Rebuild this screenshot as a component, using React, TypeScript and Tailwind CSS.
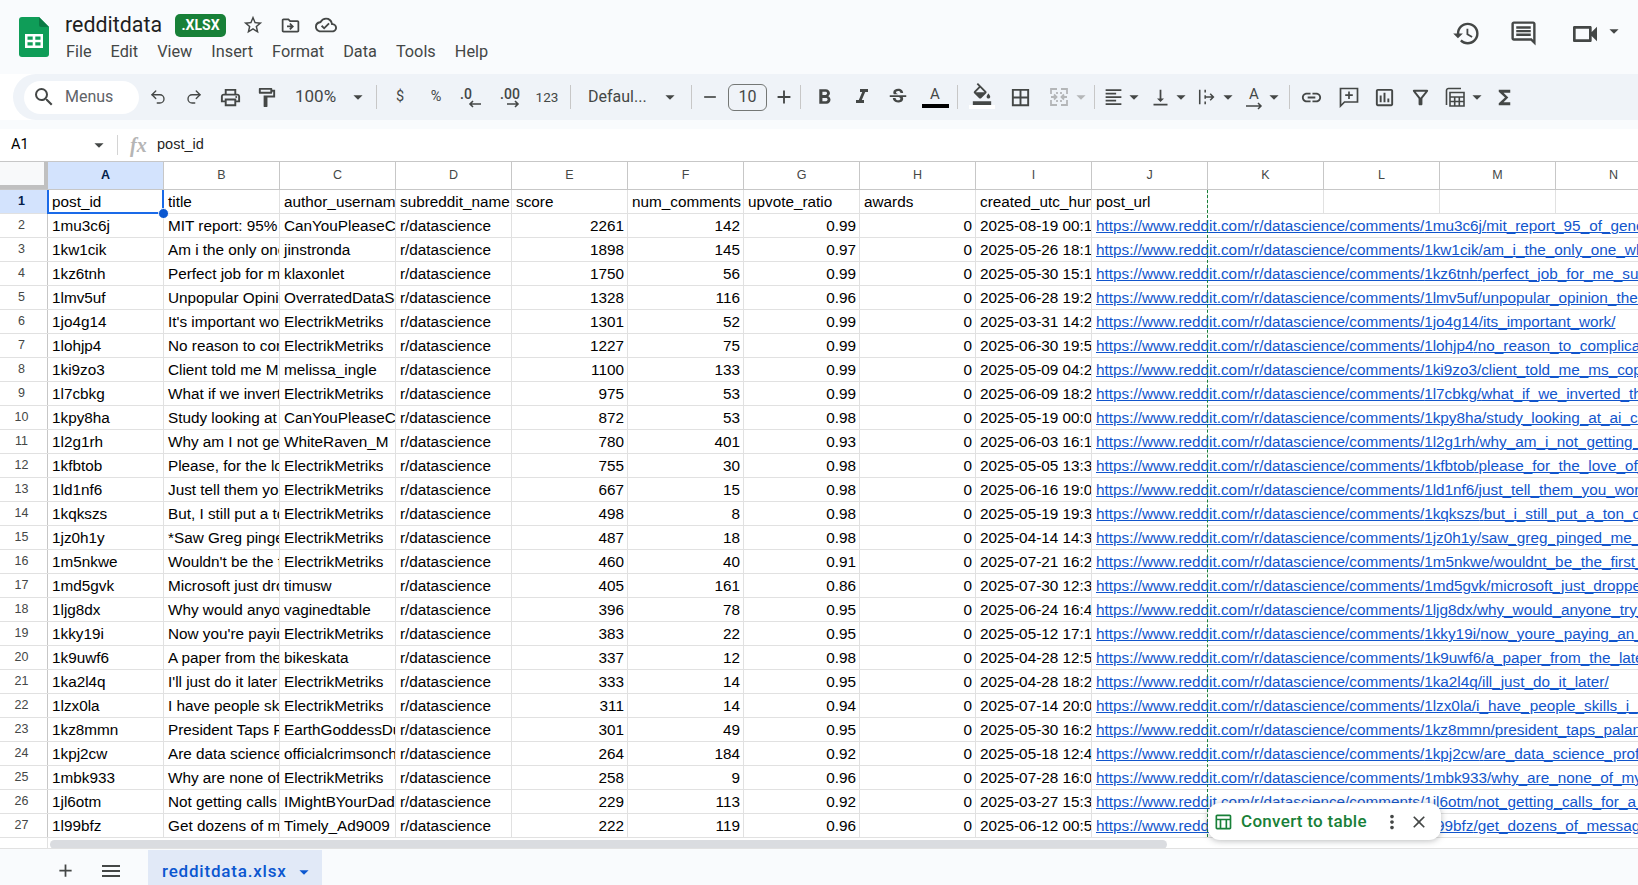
import type { ReactNode } from "react";
import { Redo2, Undo2 } from "lucide-react";
import {
  MdAdd, MdArrowDropDown, MdBorderAll, MdClose, MdFormatAlignLeft, MdFormatBold, MdFormatColorFill,
  MdFormatItalic, MdFunctions, MdHistory, MdInsertLink, MdMenu, MdMoreVert,
  MdOutlineCloudDone, MdOutlineComment, MdOutlineDriveFileMove, MdOutlineFilterAlt,
  MdOutlineFormatPaint, MdOutlineInsertChart, MdOutlinePrint, MdOutlineTableChart, MdOutlineVideocam,
  MdRemove, MdSearch, MdStarBorder, MdStrikethroughS, MdVerticalAlignBottom,
} from "react-icons/md";

const COLS = ["A", "B", "C", "D", "E", "F", "G", "H", "I", "J", "K", "L", "M", "N"];
const BASE = "https://www.reddit.com/r/datascience/comments/";

type Row = [string, string, string, number, number, string, string, string];

const ROWS: Row[] = [
  ["1mu3c6j", "MIT report: 95% of generative", "CanYouPleaseChill", 2261, 142, "0.99", "2025-08-19 00:1", "mit_report_95_of_generative_ai/"],
  ["1kw1cik", "Am i the only one who", "jinstronda", 1898, 145, "0.97", "2025-05-26 18:1", "am_i_the_only_one_who_thinks/"],
  ["1kz6tnh", "Perfect job for me", "klaxonlet", 1750, 56, "0.99", "2025-05-30 15:1", "perfect_job_for_me_sure_thing/"],
  ["1lmv5uf", "Unpopular Opinion", "OverratedDataScience", 1328, 116, "0.96", "2025-06-28 19:2", "unpopular_opinion_these_are/"],
  ["1jo4g14", "It's important work", "ElectrikMetriks", 1301, 52, "0.99", "2025-03-31 14:2", "its_important_work/"],
  ["1lohjp4", "No reason to complicate", "ElectrikMetriks", 1227, 75, "0.99", "2025-06-30 19:5", "no_reason_to_complicate_things/"],
  ["1ki9zo3", "Client told me MS Copilot", "melissa_ingle", 1100, 133, "0.99", "2025-05-09 04:2", "client_told_me_ms_copilot_replaced/"],
  ["1l7cbkg", "What if we inverted", "ElectrikMetriks", 975, 53, "0.99", "2025-06-09 18:2", "what_if_we_inverted_the_whole/"],
  ["1kpy8ha", "Study looking at AI", "CanYouPleaseChill", 872, 53, "0.98", "2025-05-19 00:0", "study_looking_at_ai_chatbots/"],
  ["1l2g1rh", "Why am I not getting", "WhiteRaven_M", 780, 401, "0.93", "2025-06-03 16:1", "why_am_i_not_getting_interviews/"],
  ["1kfbtob", "Please, for the love of", "ElectrikMetriks", 755, 30, "0.98", "2025-05-05 13:3", "please_for_the_love_of_all_that/"],
  ["1ld1nf6", "Just tell them you won", "ElectrikMetriks", 667, 15, "0.98", "2025-06-16 19:0", "just_tell_them_you_wont_do_it/"],
  ["1kqkszs", "But, I still put a ton", "ElectrikMetriks", 498, 8, "0.98", "2025-05-19 19:3", "but_i_still_put_a_ton_of_work/"],
  ["1jz0h1y", "*Saw Greg pinged me", "ElectrikMetriks", 487, 18, "0.98", "2025-04-14 14:3", "saw_greg_pinged_me_about_it/"],
  ["1m5nkwe", "Wouldn't be the first", "ElectrikMetriks", 460, 40, "0.91", "2025-07-21 16:2", "wouldnt_be_the_first_time_this/"],
  ["1md5gvk", "Microsoft just dropped", "timusw", 405, 161, "0.86", "2025-07-30 12:3", "microsoft_just_dropped_a_list/"],
  ["1ljg8dx", "Why would anyone try", "vaginedtable", 396, 78, "0.95", "2025-06-24 16:4", "why_would_anyone_try_to_do_this/"],
  ["1kky19i", "Now you're paying an", "ElectrikMetriks", 383, 22, "0.95", "2025-05-12 17:1", "now_youre_paying_an_analyst_to/"],
  ["1k9uwf6", "A paper from the latest", "bikeskata", 337, 12, "0.98", "2025-04-28 12:5", "a_paper_from_the_latest_conference/"],
  ["1ka2l4q", "I'll just do it later", "ElectrikMetriks", 333, 14, "0.95", "2025-04-28 18:2", "ill_just_do_it_later/"],
  ["1lzx0la", "I have people skills", "ElectrikMetriks", 311, 14, "0.94", "2025-07-14 20:0", "i_have_people_skills_i_swear/"],
  ["1kz8mmn", "President Taps Palantir", "EarthGoddessDude", 301, 49, "0.95", "2025-05-30 16:2", "president_taps_palantir_to_compile/"],
  ["1kpj2cw", "Are data science", "officialcrimsonchin", 264, 184, "0.92", "2025-05-18 12:4", "are_data_science_professionals/"],
  ["1mbk933", "Why are none of my", "ElectrikMetriks", 258, 9, "0.96", "2025-07-28 16:0", "why_are_none_of_my_models_working/"],
  ["1jl6otm", "Not getting calls for", "IMightBYourDad", 229, 113, "0.92", "2025-03-27 15:3", "not_getting_calls_for_a_single/"],
  ["1l99bfz", "Get dozens of messages", "Timely_Ad9009", 222, 119, "0.96", "2025-06-12 00:5", "get_dozens_of_messages_from/"],
];

function Cell({ children, right }: { children?: ReactNode; right?: boolean }) {
  return (
    <div className={`w-[116px] shrink-0 h-full border-r border-[#e1e1e1] overflow-hidden whitespace-nowrap flex items-center pl-[4px] pr-[3px] ${right ? "justify-end" : ""}`}>
      {children}
    </div>
  );
}

function Btn({ w = "w-9", children }: { w?: string; children: ReactNode }) {
  return <div className={`${w} h-full shrink-0 flex items-center justify-center`}>{children}</div>;
}

function Sep({ cls }: { cls: string }) {
  return <div className={`w-px h-[24px] bg-[#c7c7c7] shrink-0 ${cls}`} />;
}

function Caret({ cls = "" }: { cls?: string }) {
  return <MdArrowDropDown className={`text-[22px] text-[#444746] shrink-0 ${cls}`} />;
}

function MergeIcon() {
  return (
    <svg width="22" height="22" viewBox="0 0 22 22" fill="none" stroke="#b4b6b8" strokeWidth="1.8">
      <path d="M3 8V3h6M13 3h6v5M3 14v5h6M13 19h6v-5M3 11h5m-2-2.500L8.500 11 6 13.500M19 11h-5m2-2.500L13.500 11l2.500 2.500M9 6v2M13 6v2M9 14v2M13 14v2" />
    </svg>
  );
}

function WrapIcon() {
  return (
    <svg width="22" height="22" viewBox="0 0 22 22" fill="none" stroke="#444746" strokeWidth="1.7">
      <path d="M3 3v16M9 3v3M9 9v4M9 16v3M9 11h9m-3.500-3.500L18 11l-3.500 3.500" />
    </svg>
  );
}

function AddCommentIcon() {
  return (
    <svg width="22" height="22" viewBox="0 0 22 22" fill="none" stroke="#444746" strokeWidth="1.700">
      <path d="M2.500 2.500h17v13.500H6.500l-4 4zM11 5.500v7.500M7.200 9.200h7.600" />
    </svg>
  );
}

function CalcTableIcon() {
  return (
    <svg width="24" height="24" viewBox="0 0 24 24" fill="none" stroke="#444746" strokeWidth="1.600">
      <path d="M3.500 20V5.500a2 2 0 0 1 2-2H18M7 7.500h14V21H7zM7 12h14M7 16.500h14M11.700 12v9M16.300 12v9" />
    </svg>
  );
}

function ArrowUnder({ dir }: { dir: "left" | "right" }) {
  return (
    <svg width="14" height="8" viewBox="0 0 14 8" fill="none" stroke="#444746" strokeWidth="1.6" className="absolute -bottom-[3px] right-0">
      {dir === "left" ? <path d="M13 4H2m3-3L2 4l3 3" /> : <path d="M1 4h11M9 1l3 3-3 3" />}
    </svg>
  );
}

export default function App() {
  return (
    <div className="relative w-[1638px] h-[885px] overflow-hidden flex flex-col bg-white text-black font-['Liberation_Sans',Arial,sans-serif]">
      {/* title + menus */}
      <div className="h-[74px] shrink-0 bg-[#f9fbfd] flex font-['Roboto',sans-serif]">
        <svg width="30" height="40" viewBox="0 0 30 40" className="ml-[19px] mt-[17px] shrink-0">
          <path d="M3 0h17l10 10v27a3 3 0 0 1-3 3H3a3 3 0 0 1-3-3V3a3 3 0 0 1 3-3z" fill="#0f9d58" />
          <path d="M20 0l10 10h-8a2 2 0 0 1-2-2z" fill="#0b7a44" />
          <path d="M6 17h18v14H6zM8.500 19.500v3.300h5.200v-3.300zm7.800 0v3.300h5.200v-3.300zm-7.800 5.700v3.300h5.200v-3.300zm7.800 0v3.300h5.200v-3.300z" fill="#fff" fillRule="evenodd" />
        </svg>
        <div className="ml-[16px] flex flex-col">
          <div className="flex items-center h-[24px] mt-[13px]">
            <span className="text-[21.400px] text-[#1f1f1f] w-[110px]">redditdata</span>
            <span className="w-[51px] h-[23px] rounded-[5px] bg-[#188038] text-white text-[14px] font-bold flex items-center justify-center">.XLSX</span>
            <MdStarBorder className="text-[22px] text-[#444746] ml-[16px]" />
            <MdOutlineDriveFileMove className="text-[21px] text-[#444746] ml-[16px]" />
            <MdOutlineCloudDone className="text-[22px] text-[#444746] ml-[14px]" />
          </div>
          <div className="flex items-center gap-[19px] mt-[3px] text-[16.300px] text-[#444746] ml-px">
            <span>File</span><span>Edit</span><span>View</span><span>Insert</span><span>Format</span><span>Data</span><span>Tools</span><span>Help</span>
          </div>
        </div>
        <div className="ml-auto flex items-start pt-[19px] text-[#444746]">
          <MdHistory className="text-[29px]" />
          <MdOutlineComment className="text-[29px] ml-[28px]" />
          <MdOutlineVideocam className="text-[32px] ml-[31px] -mt-[1px]" />
          <Caret cls="ml-[2px] mt-[1px] mr-[13px]" />
        </div>
      </div>

      {/* toolbar */}
      <div className="h-[46px] shrink-0 ml-[13px] rounded-l-full bg-[#eff3f8] flex items-center text-[#444746] font-['Roboto',sans-serif]">
        <div className="ml-[11px] w-[115px] h-[33px] rounded-full bg-white flex items-center shrink-0">
          <MdSearch className="text-[24px] ml-[8px] text-[#444746]" />
          <span className="text-[16px] text-[#5f6368] ml-[9px]">Menus</span>
        </div>
        <Btn w="w-[37px]"><Undo2 size={18} strokeWidth={1.8} /></Btn>
        <Btn><Redo2 size={18} strokeWidth={1.8} /></Btn>
        <Btn><MdOutlinePrint className="text-[23px]" /></Btn>
        <Btn><MdOutlineFormatPaint className="text-[23px]" /></Btn>
        <div className="w-[85px] h-full shrink-0 flex items-center pl-[11px]">
          <span className="text-[17px] w-[51px]">100%</span>
          <Caret cls="ml-[1px]" />
        </div>
        <Sep cls="ml-[7px]" />
        <Btn w="w-[46px]"><span className="text-[14.500px]">$</span></Btn>
        <Btn w="w-[26px]"><span className="text-[14.500px]">%</span></Btn>
        <Btn w="w-[44px]"><span className="relative text-[14px] font-medium w-[22px] -mt-[6px]">.0<ArrowUnder dir="left" /></span></Btn>
        <Btn w="w-[34px]"><span className="relative text-[14px] font-medium -mt-[6px]">.00<ArrowUnder dir="right" /></span></Btn>
        <Btn w="w-[40px]"><span className="text-[13.500px]">123</span></Btn>
        <Sep cls="ml-[3px]" />
        <div className="w-[120px] h-full shrink-0 flex items-center pl-[17px]">
          <span className="text-[16px] w-[73px]">Defaul...</span>
          <Caret cls="ml-[-2px]" />
        </div>
        <Sep cls="" />
        <Btn w="w-[36px]"><MdRemove className="text-[20px]" /></Btn>
        <div className="w-[39px] h-[27px] rounded-[6px] border border-[#747775] flex items-center justify-center text-[16px] shrink-0">10</div>
        <Btn w="w-[33px]"><MdAdd className="text-[22px]" /></Btn>
        <Sep cls="" />
        <Btn w="w-[47px]"><MdFormatBold className="text-[25px]" /></Btn>
        <Btn w="w-[28px]"><MdFormatItalic className="text-[24px]" /></Btn>
        <Btn w="w-[44px]"><MdStrikethroughS className="text-[22px]" /></Btn>
        <div className="w-[30px] h-full shrink-0 flex flex-col items-center justify-center">
          <span className="text-[15px] leading-[17px]">A</span>
          <div className="w-[27px] h-[4px] bg-black mt-px" />
        </div>
        <Sep cls="ml-[7px]" />
        <div className="w-[47px] h-full shrink-0 flex flex-col items-center justify-center">
          <MdFormatColorFill className="text-[22px] -mt-[3px]" />
          <div className="w-[26px] h-[4px] bg-white" />
        </div>
        <Btn w="w-[31px]"><MdBorderAll className="text-[23px]" /></Btn>
        <div className="w-[59px] h-full shrink-0 flex items-center pl-[12px]">
          <MergeIcon />
          <MdArrowDropDown className="text-[22px] text-[#b4b6b8]" />
        </div>
        <Sep cls="-ml-[1px]" />
        <div className="w-[50px] h-full shrink-0 flex items-center pl-[8px]">
          <MdFormatAlignLeft className="text-[22px]" />
          <Caret cls="-ml-[1px]" />
        </div>
        <div className="w-[47px] h-full shrink-0 flex items-center pl-[5px]">
          <MdVerticalAlignBottom className="text-[23px]" />
          <Caret cls="-ml-[1px]" />
        </div>
        <div className="w-[47px] h-full shrink-0 flex items-center pl-[5px]">
          <WrapIcon />
          <Caret cls="" />
        </div>
        <div className="w-[46px] h-full shrink-0 flex items-center pl-[6px]">
          <span className="relative w-[20px] text-center text-[15px] -mt-[6px]">
            A
            <svg width="18" height="8" viewBox="0 0 18 8" fill="none" stroke="#444746" strokeWidth="1.500" className="absolute -bottom-[5px] left-0">
              <path d="M1 4h15m-3-3 3 3-3 3" />
            </svg>
          </span>
          <Caret cls="" />
        </div>
        <Sep cls="ml-[4px]" />
        <Btn w="w-[43px]"><MdInsertLink className="text-[23px]" /></Btn>
        <Btn w="w-[31px]"><AddCommentIcon /></Btn>
        <Btn w="w-[41px]"><MdOutlineInsertChart className="text-[23px]" /></Btn>
        <Btn w="w-[30px]"><MdOutlineFilterAlt className="text-[23px]" /></Btn>
        <div className="w-[57px] h-full shrink-0 flex items-center pl-[8px]">
          <CalcTableIcon />
          <Caret cls="-ml-[1px]" />
        </div>
        <Btn w="w-[24px]"><MdFunctions className="text-[23px]" /></Btn>
      </div>

      <div className="h-[9px] shrink-0 bg-[#f9fbfd]" />

      {/* formula bar */}
      <div className="h-[32px] shrink-0 flex items-center bg-white">
        <span className="text-[14.500px] ml-[11px] w-[77px] font-['Roboto',sans-serif]">A1</span>
        <MdArrowDropDown className="text-[22px] text-[#444746]" />
        <div className="w-px h-[20px] bg-[#d4d4d4] ml-[7px]" />
        <span className="ml-[12px] text-[20px] italic font-bold text-[#b5b5b5] font-['Liberation_Serif',serif] w-[27px]">fx</span>
        <span className="text-[14.500px] text-[#1f1f1f]">post_id</span>
      </div>

      {/* grid */}
      <div className="flex-1 min-h-0 flex flex-col text-[15.300px] leading-none">
        <div className="h-[29px] shrink-0 flex border-y border-[#c7c7c7] text-[12.500px] text-[#444746]">
          <div className="w-[48px] shrink-0 bg-[#f8f9fa] border-r-[4px] border-b-[4px] border-[#c0c0c0]" />
          {COLS.map((c) => (
            <div
              key={c}
              className={`w-[116px] shrink-0 border-r border-[#c7c7c7] flex items-center justify-center ${c === "A" ? "bg-[#d3e3fd] font-bold text-[#041e49]" : ""}`}
            >
              {c}
            </div>
          ))}
        </div>

        <div className="h-[24px] shrink-0 flex border-b border-[#e1e1e1]">
          <div className="w-[48px] shrink-0 bg-[#d3e3fd] border-r border-[#c7c7c7] flex items-center justify-center pr-[4px] text-[12.500px] font-bold text-[#041e49]">1</div>
          <Cell>post_id</Cell>
          <Cell>title</Cell>
          <Cell>author_username</Cell>
          <Cell>subreddit_name</Cell>
          <Cell>score</Cell>
          <Cell>num_comments</Cell>
          <Cell>upvote_ratio</Cell>
          <Cell>awards</Cell>
          <Cell>created_utc_human</Cell>
          <Cell>post_url</Cell>
          <Cell /><Cell /><Cell /><Cell />
        </div>

        {ROWS.map((r, i) => (
          <div key={r[0]} className="h-[24px] shrink-0 flex border-b border-[#e1e1e1]">
            <div className="w-[48px] shrink-0 border-r border-[#c7c7c7] flex items-center justify-center pr-[4px] text-[12.500px] text-[#444746]">{i + 2}</div>
            <Cell>{r[0]}</Cell>
            <Cell>{r[1]}</Cell>
            <Cell>{r[2]}</Cell>
            <Cell>r/datascience</Cell>
            <Cell right>{r[3]}</Cell>
            <Cell right>{r[4]}</Cell>
            <Cell right>{r[5]}</Cell>
            <Cell right>0</Cell>
            <Cell>{r[6]}</Cell>
            <div className="flex-1 min-w-0 h-full overflow-hidden whitespace-nowrap flex items-center pl-[4px] text-[#1155cc] underline">
              {BASE}{r[0]}/{r[7]}
            </div>
          </div>
        ))}

        {/* horizontal scrollbar */}
        <div className="h-[11px] shrink-0 flex bg-white">
          <div className="w-[48px] shrink-0 border-r border-[#e1e1e1]" />
          <div className="ml-[2px] w-[1117px] h-[9px] mt-[2px] rounded-full bg-[#dadce0]" />
        </div>
      </div>

      {/* sheet tabs */}
      <div className="h-[37px] shrink-0 bg-[#f9fbfd] border-t border-[#e1e1e1] flex text-[#444746] font-['Roboto',sans-serif]">
        <MdAdd className="text-[21px] ml-[55px] mt-[11px]" />
        <MdMenu className="text-[24px] ml-[23px] mt-[10px]" />
        <div className="ml-[25px] mt-[1px] w-[174px] h-[35px] bg-[#e1e9f7] flex items-center pl-[14px] pt-[9px] text-[#0b57d0]">
          <span className="text-[17px] font-medium tracking-[0.8px] w-[131px] whitespace-nowrap">redditdata.xlsx</span>
          <MdArrowDropDown className="text-[22px]" />
        </div>
      </div>

      {/* selection outline on A1 */}
      <div className="absolute left-[47px] top-[190px] w-[117px] h-[24px] border-2 border-t-0 border-[#1a6ae8] pointer-events-none" />
      <div className="absolute left-[158px] top-[208px] w-[11px] h-[11px] rounded-full bg-[#0b57d0] border border-white" />

      {/* green dashed guide */}
      <div className="absolute left-[1207px] top-[190px] h-[647px] border-l border-dashed border-[#188038]" />

      {/* convert to table chip */}
      <div className="absolute left-[1208px] top-[803px] w-[233px] h-[37px] rounded-[12px] bg-white shadow-[0_1px_6px_rgba(60,64,67,0.35)] flex items-center font-['Roboto',sans-serif]">
        <MdOutlineTableChart className="text-[20px] text-[#188038] ml-[5px]" />
        <span className="text-[17px] font-medium text-[#188038] ml-[8px] tracking-[0.3px] w-[139px] whitespace-nowrap">Convert to table</span>
        <MdMoreVert className="text-[22px] text-[#444746] ml-[1px]" />
        <MdClose className="text-[20px] text-[#444746] ml-[6px]" />
      </div>
    </div>
  );
}
